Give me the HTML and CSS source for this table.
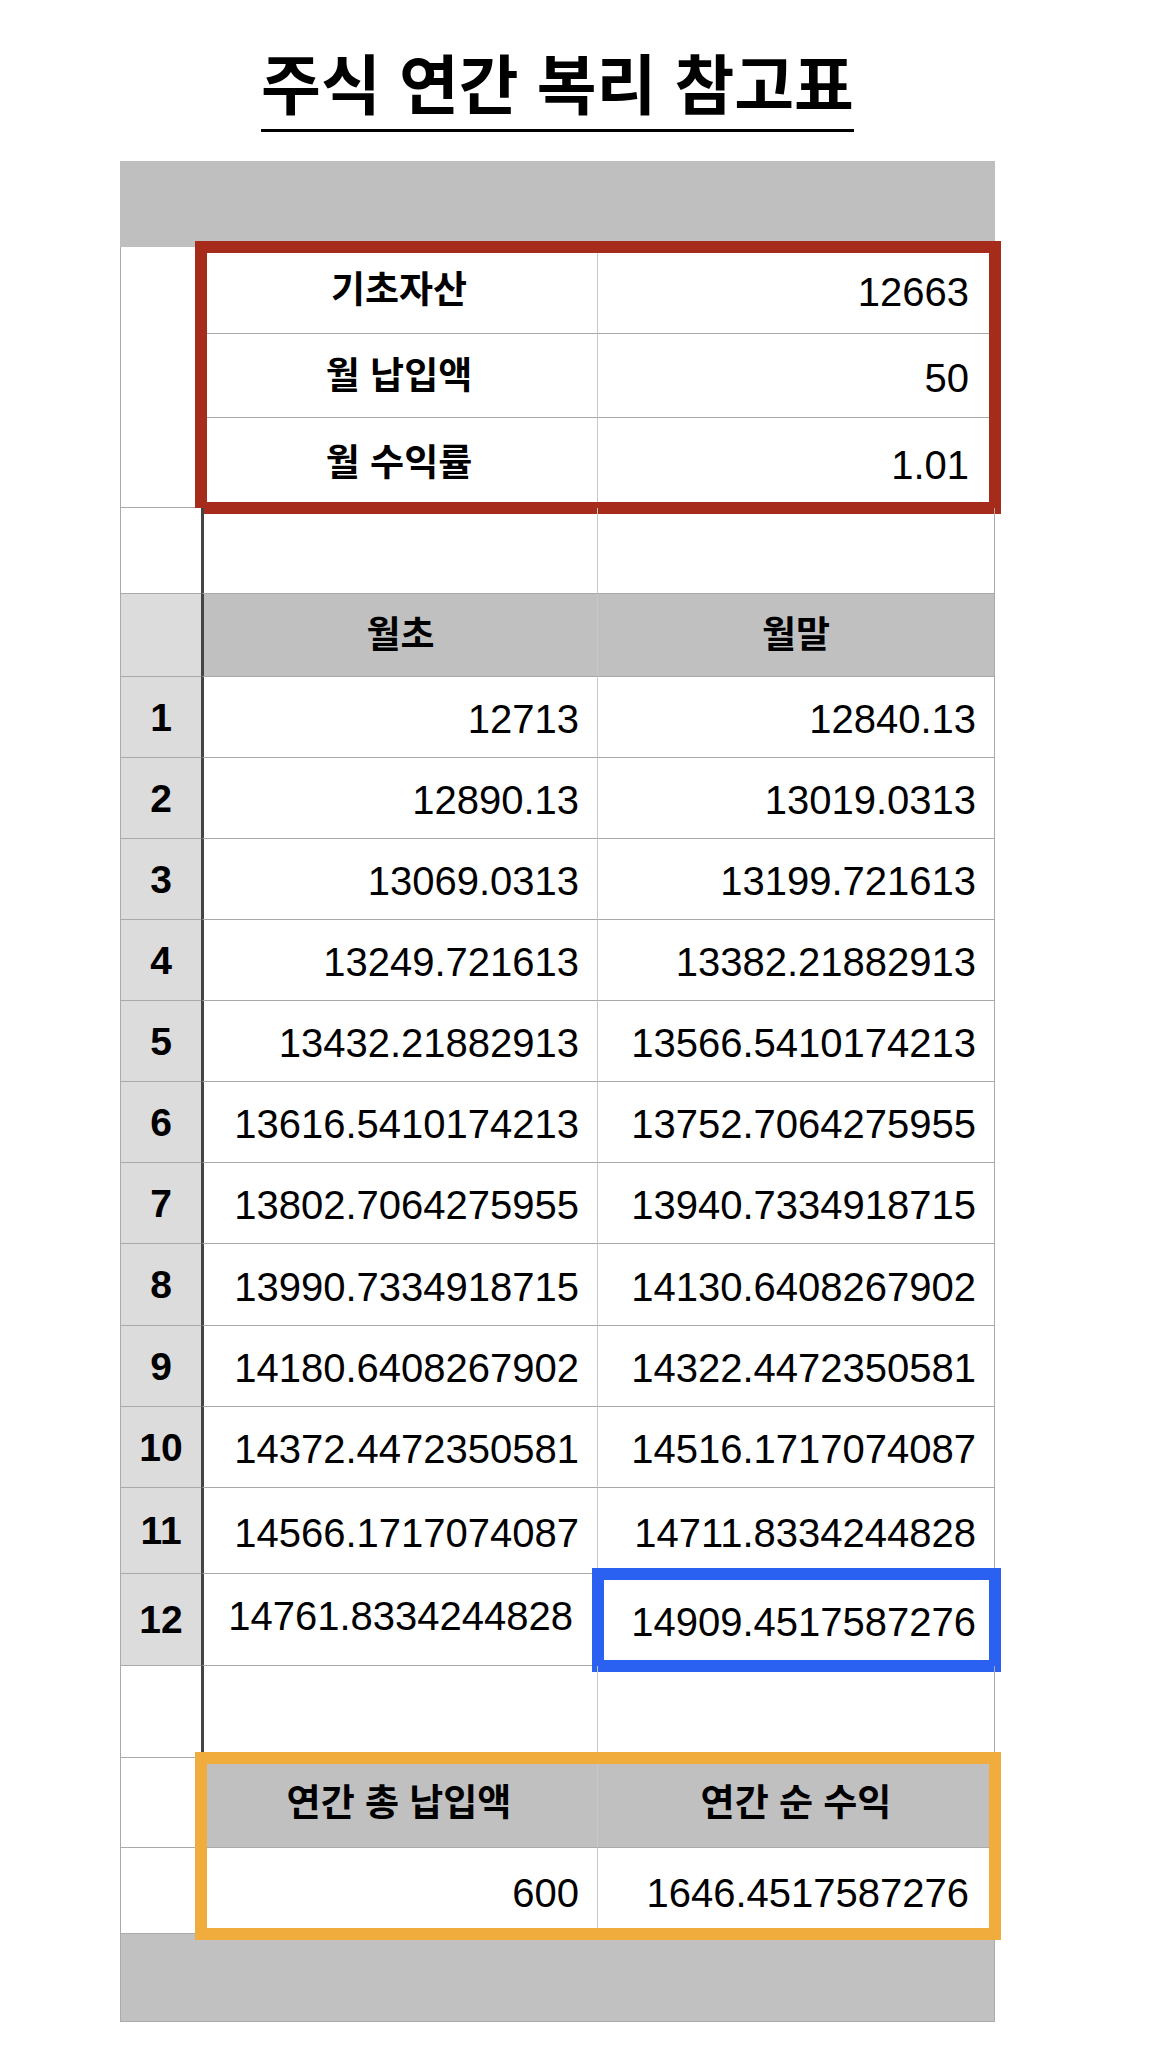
FILE: index.html
```html
<!DOCTYPE html>
<html lang="ko">
<head>
<meta charset="utf-8">
<title>주식 연간 복리 참고표</title>
<link rel="stylesheet" href="styles.css">
</head>
<body>
<div class="page">
  <div class="title-wrap"><h1 class="title">주식 연간 복리 참고표</h1></div>
  <div class="sheet">
    <div class="band"></div>

    <div class="section">
      <div class="idx idx-blank"></div>
      <div class="block block-red">
        <div class="brow h87"><div class="cell c1 label">기초자산</div><div class="cell c2 num wide">12663</div></div>
        <div class="brow h84"><div class="cell c1 label">월 납입액</div><div class="cell c2 num wide">50</div></div>
        <div class="brow h90"><div class="cell c1 label">월 수익률</div><div class="cell c2 num wide">1.01</div></div>
      </div>
    </div>

    <div class="row h86"><div class="idx idx-blank"></div><div class="cell c1 dark"></div><div class="cell c2"></div></div>
    <div class="row h83"><div class="idx"></div><div class="cell c1 dark label hdr">월초</div><div class="cell c2 label hdr">월말</div></div>

    <div class="row h81"><div class="idx">1</div><div class="cell c1 dark num">12713</div><div class="cell c2 num">12840.13</div></div>
    <div class="row h81"><div class="idx">2</div><div class="cell c1 dark num">12890.13</div><div class="cell c2 num">13019.0313</div></div>
    <div class="row h81"><div class="idx">3</div><div class="cell c1 dark num">13069.0313</div><div class="cell c2 num">13199.721613</div></div>
    <div class="row h81"><div class="idx">4</div><div class="cell c1 dark num">13249.721613</div><div class="cell c2 num">13382.21882913</div></div>
    <div class="row h81"><div class="idx">5</div><div class="cell c1 dark num">13432.21882913</div><div class="cell c2 num">13566.5410174213</div></div>
    <div class="row h81"><div class="idx">6</div><div class="cell c1 dark num">13616.5410174213</div><div class="cell c2 num">13752.7064275955</div></div>
    <div class="row h81"><div class="idx">7</div><div class="cell c1 dark num">13802.7064275955</div><div class="cell c2 num">13940.7334918715</div></div>
    <div class="row h82"><div class="idx">8</div><div class="cell c1 dark num">13990.7334918715</div><div class="cell c2 num">14130.6408267902</div></div>
    <div class="row h81"><div class="idx">9</div><div class="cell c1 dark num">14180.6408267902</div><div class="cell c2 num">14322.4472350581</div></div>
    <div class="row h81"><div class="idx">10</div><div class="cell c1 dark num">14372.4472350581</div><div class="cell c2 num">14516.1717074087</div></div>
    <div class="row h86"><div class="idx">11</div><div class="cell c1 dark num">14566.1717074087</div><div class="cell c2 num">14711.8334244828</div></div>
    <div class="row h92"><div class="idx">12</div><div class="cell c1 dark num raised">14761.8334244828</div><div class="cell c2 num mark-blue">14909.4517587276</div></div>

    <div class="row h92"><div class="idx idx-blank"></div><div class="cell c1 dark"></div><div class="cell c2"></div></div>

    <div class="section">
      <div class="idx-stack">
        <div class="idx idx-blank h90"></div>
        <div class="idx idx-blank h86"></div>
      </div>
      <div class="block block-orange">
        <div class="brow h90"><div class="cell c1 label hdr">연간 총 납입액</div><div class="cell c2 label hdr">연간 순 수익</div></div>
        <div class="brow h86"><div class="cell c1 num">600</div><div class="cell c2 num wide">1646.4517587276</div></div>
      </div>
    </div>

    <div class="band band-bottom"></div>
  </div>
</div>
</body>
</html>
```

FILE: styles.css
```css
body {
  margin: 0;
  background: #ffffff;
  color: #000000;
  font-family: "Liberation Sans", "Noto Sans CJK KR", sans-serif;
}

.page {
  width: 875px;
  margin-left: 120px;
}

.title-wrap {
  text-align: center;
  padding-top: 33px;
  margin-bottom: 29px;
}

.title {
  display: inline-block;
  margin: 0;
  font-family: "Noto Sans CJK KR", sans-serif;
  font-weight: 700;
  font-size: 65px;
  line-height: 96px;
  border-bottom: 3px solid #000;
}

.band {
  height: 86px;
  background: #bfbfbf;
}

.band-bottom {
  height: 88px;
  box-sizing: border-box;
  background: #c1c1c1;
  border-left: 1px solid #aaaaaa;
  border-right: 1px solid #aaaaaa;
  border-bottom: 1px solid #aaaaaa;
}

.section {
  display: grid;
  grid-template-columns: 81px 794px;
}

.idx-stack {
  display: flex;
  flex-direction: column;
}

.block {
  display: flex;
  flex-direction: column;
  outline-width: 12px;
  outline-style: solid;
  outline-offset: -6px;
}

.block-red { outline-color: #a62b1a; }
.block-orange { outline-color: #f0ad3e; }

.row {
  display: grid;
  grid-template-columns: 81px 397px 397px;
}

.brow {
  display: grid;
  grid-template-columns: 397px 397px;
}

.h81 { height: 81px; }
.h82 { height: 82px; }
.h83 { height: 83px; }
.h84 { height: 84px; }
.h86 { height: 86px; }
.h87 { height: 87px; }
.h90 { height: 90px; }
.h92 { height: 92px; }

.cell,
.idx {
  box-sizing: border-box;
  border-bottom: 1px solid #aaaaaa;
  display: flex;
  align-items: center;
  line-height: 1.2;
  white-space: nowrap;
}

.idx {
  border-left: 1px solid #aaaaaa;
  justify-content: center;
  background: #dcdcdc;
  font-weight: 700;
  font-size: 39px;
  padding-top: 2px;
}

.idx-blank {
  background: #ffffff;
}

.c1 { border-right: 1px solid #c8c8c8; }
.c2 { border-right: 1px solid #aaaaaa; }

.dark { border-left: 3px solid #444444; }

.num {
  justify-content: flex-end;
  padding-right: 18px;
  padding-top: 4px;
  font-size: 40px;
}

.num.wide { padding-right: 25px; }

.num.raised {
  padding-right: 24px;
  padding-top: 0;
  padding-bottom: 8px;
}

.label {
  justify-content: center;
  font-weight: 700;
  font-size: 37px;
  padding-top: 3px;
}

.hdr { background: #c0c0c0; }

.mark-blue {
  outline: 12px solid #2b61f0;
  outline-offset: -6px;
}
```
